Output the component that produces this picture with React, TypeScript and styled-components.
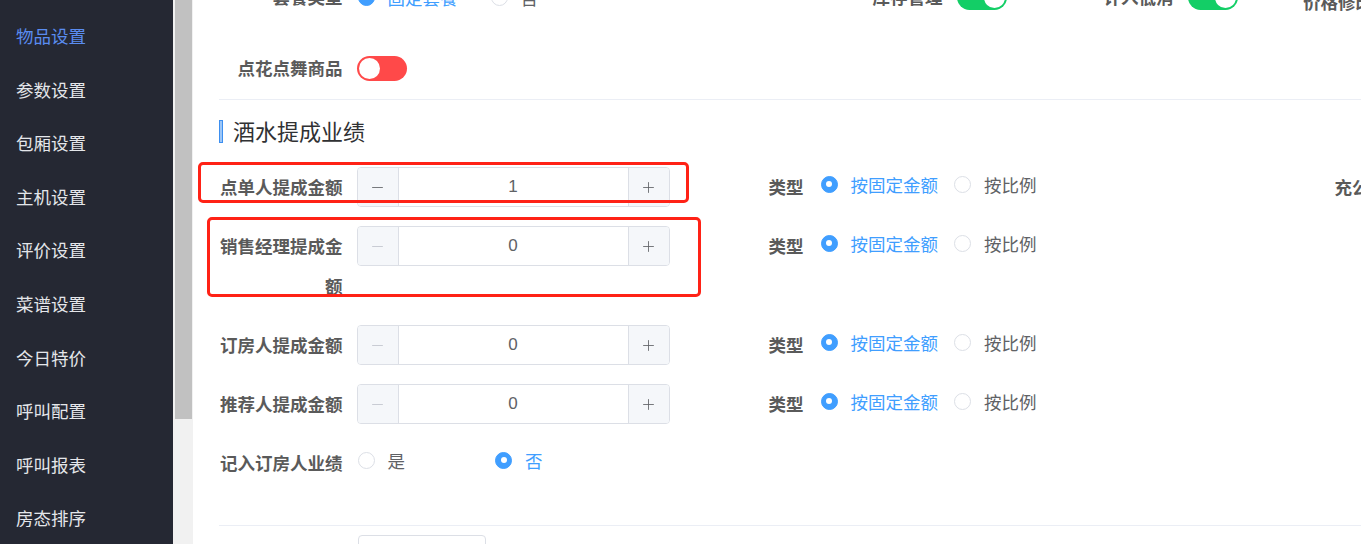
import styled, { createGlobalStyle } from "styled-components";
import { Minus, Plus } from "lucide-react";

const MENU = [
  "物品设置",
  "参数设置",
  "包厢设置",
  "主机设置",
  "评价设置",
  "菜谱设置",
  "今日特价",
  "呼叫配置",
  "呼叫报表",
  "房态排序",
];

const COMMISSION = [
  { label: "点单人提成金额", value: 1, third: "充公提成金额" },
  { label: "销售经理提成金额", value: 0 },
  { label: "订房人提成金额", value: 0 },
  { label: "推荐人提成金额", value: 0 },
];

const GlobalStyle = createGlobalStyle`
  html, body {
    margin: 0;
    padding: 0;
    overflow: hidden;
    background: #ffffff;
  }
  * {
    box-sizing: border-box;
  }
  body {
    font-family: "Noto Sans CJK SC", "Noto Sans", sans-serif;
  }
`;

export default function App() {
  return (
    <>
      <GlobalStyle />
      <LayoutStyled>
        <SidebarStyled>
          {MENU.map((item, i) => (
            <MenuItemStyled key={item} $active={i === 0}>
              {item}
            </MenuItemStyled>
          ))}
        </SidebarStyled>
        <ScrollTrackStyled>
          <ScrollThumbStyled />
        </ScrollTrackStyled>

        <MainStyled>
          <FormRowStyled $mt={-23}>
            <FormItemStyled $width={600}>
              <LabelStyled>套餐类型</LabelStyled>
              <RadioGroupStyled $gap={32}>
                <Radio checked text="固定套餐" />
                <Radio text="否" />
              </RadioGroupStyled>
            </FormItemStyled>
            <FormItemStyled $width={231}>
              <LabelStyled>库存管理</LabelStyled>
              <SwitchStyled $on $color="#13ce66" />
            </FormItemStyled>
            <FormItemStyled $width={253}>
              <LabelStyled>计入低消</LabelStyled>
              <SwitchStyled $on $color="#13ce66" />
            </FormItemStyled>
            <FormItemStyled>
              <LabelStyled $free $low>
                价格修改
              </LabelStyled>
            </FormItemStyled>
          </FormRowStyled>

          <FormRowStyled $mt={31}>
            <FormItemStyled>
              <LabelStyled>点花点舞商品</LabelStyled>
              <SwitchStyled $color="#ff4949" />
            </FormItemStyled>
          </FormRowStyled>

          <DividerStyled $mt={11} />

          <SectionTitleStyled>
            <TitleBarStyled />
            酒水提成业绩
          </SectionTitleStyled>

          {COMMISSION.map((row) => (
            <FormRowStyled key={row.label} $mb={19}>
              <FormItemStyled $width={450}>
                <LabelStyled>{row.label}</LabelStyled>
                <InputNumber value={row.value} />
              </FormItemStyled>
              <FormItemStyled $width={665}>
                <LabelStyled $width={150} $pr={16}>
                  类型
                </LabelStyled>
                <RadioGroupStyled $gap={15} $up>
                  <Radio checked text="按固定金额" />
                  <Radio text="按比例" />
                </RadioGroupStyled>
              </FormItemStyled>
              {row.third && (
                <FormItemStyled>
                  <LabelStyled $free>{row.third}</LabelStyled>
                </FormItemStyled>
              )}
            </FormRowStyled>
          ))}

          <FormRowStyled>
            <FormItemStyled>
              <LabelStyled>记入订房人业绩</LabelStyled>
              <RadioGroupStyled $gap={89} $up>
                <Radio text="是" />
                <Radio checked text="否" />
              </RadioGroupStyled>
            </FormItemStyled>
          </FormRowStyled>

          <DividerStyled $mt={42} />

          <FormRowStyled $mt={9}>
            <FormItemStyled>
              <LabelStyled />
              <PlainInputStyled />
            </FormItemStyled>
          </FormRowStyled>
        </MainStyled>

        <AnnotationStyled $left={198} $top={162} $w={491} $h={41} />
        <AnnotationStyled $left={207} $top={217} $w={494} $h={80} />
      </LayoutStyled>
    </>
  );
}

function InputNumber({ value }: { value: number }) {
  const disabled = value <= 0;
  return (
    <InputNumberStyled>
      <StepStyled $side="left" $disabled={disabled}>
        <Minus size={17} strokeWidth={1.2} />
      </StepStyled>
      <ValueStyled>{value}</ValueStyled>
      <StepStyled $side="right">
        <Plus size={17} strokeWidth={1.2} />
      </StepStyled>
    </InputNumberStyled>
  );
}

function Radio({ checked, text }: { checked?: boolean; text: string }) {
  return (
    <RadioItemStyled $checked={checked}>
      <RadioCircleStyled $checked={checked} />
      {text}
    </RadioItemStyled>
  );
}

const LayoutStyled = styled.div`
  position: relative;
  display: flex;
  width: 100vw;
  height: 100vh;
  overflow: hidden;
`;

const SidebarStyled = styled.nav`
  flex: 0 0 173px;
  padding-top: 9px;
  background-color: #252833;
`;

const MenuItemStyled = styled.div<{ $active?: boolean }>`
  height: 53.6px;
  padding-left: 16px;
  line-height: 53.6px;
  color: ${({ $active }) => ($active ? "#5a8cf0" : "#e4e6ea")};
  font-size: 17.5px;
  white-space: nowrap;
`;

const ScrollTrackStyled = styled.div`
  flex: 0 0 20px;
  padding-left: 2px;
  background-color: #f1f1f1;
`;

const ScrollThumbStyled = styled.div`
  width: 17px;
  height: 419px;
  background-color: #c1c1c1;
`;

const MainStyled = styled.main`
  flex: 1;
  min-width: 0;
  padding-left: 26px;
  color: #5a5a5a;
  font-size: 17.5px;
`;

const FormRowStyled = styled.div<{ $mt?: number; $mb?: number }>`
  display: flex;
  align-items: flex-start;
  margin-top: ${({ $mt }) => $mt ?? 0}px;
  margin-bottom: ${({ $mb }) => $mb ?? 0}px;
  white-space: nowrap;
`;

const FormItemStyled = styled.div<{ $width?: number }>`
  display: flex;
  align-items: flex-start;
  flex: 0 0 ${({ $width }) => ($width ? `${$width}px` : "auto")};
`;

const LabelStyled = styled.label<{
  $width?: number;
  $pr?: number;
  $free?: boolean;
  $low?: boolean;
}>`
  position: relative;
  top: ${({ $low }) => ($low ? "5px" : "0")};
  flex: 0 0 ${({ $width, $free }) => ($free ? "auto" : `${$width ?? 137.5}px`)};
  padding-right: ${({ $pr }) => $pr ?? 14}px;
  min-height: 40px;
  line-height: 40px;
  color: #5a5a5a;
  font-size: 17.5px;
  font-weight: 700;
  text-align: ${({ $free }) => ($free ? "left" : "right")};
  white-space: normal;
`;

const SwitchStyled = styled.span<{ $on?: boolean; $color: string }>`
  position: relative;
  display: inline-block;
  flex: 0 0 50px;
  height: 25px;
  margin-top: 7.5px;
  border-radius: 13px;
  background-color: ${({ $color }) => $color};

  &::after {
    content: "";
    position: absolute;
    top: 2px;
    left: ${({ $on }) => ($on ? "27px" : "2px")};
    width: 21px;
    height: 21px;
    border-radius: 50%;
    background-color: #ffffff;
  }
`;

const DividerStyled = styled.div<{ $mt: number }>`
  height: 1px;
  margin-top: ${({ $mt }) => $mt}px;
  background-color: #ebeef5;
`;

const SectionTitleStyled = styled.h3`
  display: flex;
  align-items: center;
  column-gap: 10px;
  height: 24px;
  margin: 18px 0 25px;
  color: #303133;
  font-size: 22px;
  font-weight: 400;
  line-height: 24px;
`;

const TitleBarStyled = styled.span`
  flex: 0 0 4px;
  height: 23px;
  margin-top: 2px;
  border: 1px solid #3d8ff0;
  background-color: #9cc6f7;
`;

const InputNumberStyled = styled.div`
  display: flex;
  flex: 0 0 313px;
  height: 40px;
  border: 1px solid #dcdfe6;
  border-radius: 4px;
  overflow: hidden;
  background-color: #ffffff;
`;

const StepStyled = styled.span<{ $side: "left" | "right"; $disabled?: boolean }>`
  display: flex;
  align-items: center;
  justify-content: center;
  flex: 0 0 41px;
  background-color: #f5f7fa;
  color: ${({ $disabled }) => ($disabled ? "#c0c4cc" : "#606266")};
  ${({ $side }) =>
    $side === "left"
      ? "border-right: 1px solid #dcdfe6;"
      : "border-left: 1px solid #dcdfe6;"}
`;

const ValueStyled = styled.span`
  flex: 1;
  color: #606266;
  font-family: "Liberation Sans", Arial, sans-serif;
  font-size: 17px;
  line-height: 38px;
  text-align: center;
`;

const RadioGroupStyled = styled.div<{ $gap: number; $up?: boolean }>`
  display: flex;
  align-items: center;
  column-gap: ${({ $gap }) => $gap}px;
  height: 40px;
  margin-top: ${({ $up }) => ($up ? "-3px" : "0")};
`;

const RadioItemStyled = styled.span<{ $checked?: boolean }>`
  display: inline-flex;
  align-items: center;
  column-gap: 13px;
  color: ${({ $checked }) => ($checked ? "#409eff" : "#606266")};
  font-size: 17.5px;
  font-weight: 400;
`;

const RadioCircleStyled = styled.span<{ $checked?: boolean }>`
  position: relative;
  flex: 0 0 17px;
  height: 17px;
  margin-left: 1px;
  border: 1px solid ${({ $checked }) => ($checked ? "#409eff" : "#dcdfe6")};
  border-radius: 50%;
  background-color: ${({ $checked }) => ($checked ? "#409eff" : "#ffffff")};

  &::after {
    content: "";
    display: ${({ $checked }) => ($checked ? "block" : "none")};
    position: absolute;
    top: 50%;
    left: 50%;
    width: 6px;
    height: 6px;
    border-radius: 50%;
    background-color: #ffffff;
    transform: translate(-50%, -50%);
  }
`;

const PlainInputStyled = styled.div`
  flex: 0 0 128px;
  height: 40px;
  margin-left: 1px;
  border: 1px solid #dcdfe6;
  border-radius: 4px;
`;

const AnnotationStyled = styled.div<{
  $left: number;
  $top: number;
  $w: number;
  $h: number;
}>`
  position: absolute;
  left: ${({ $left }) => $left}px;
  top: ${({ $top }) => $top}px;
  width: ${({ $w }) => $w}px;
  height: ${({ $h }) => $h}px;
  border: 3px solid #ff2216;
  border-radius: 5px;
  pointer-events: none;
`;
